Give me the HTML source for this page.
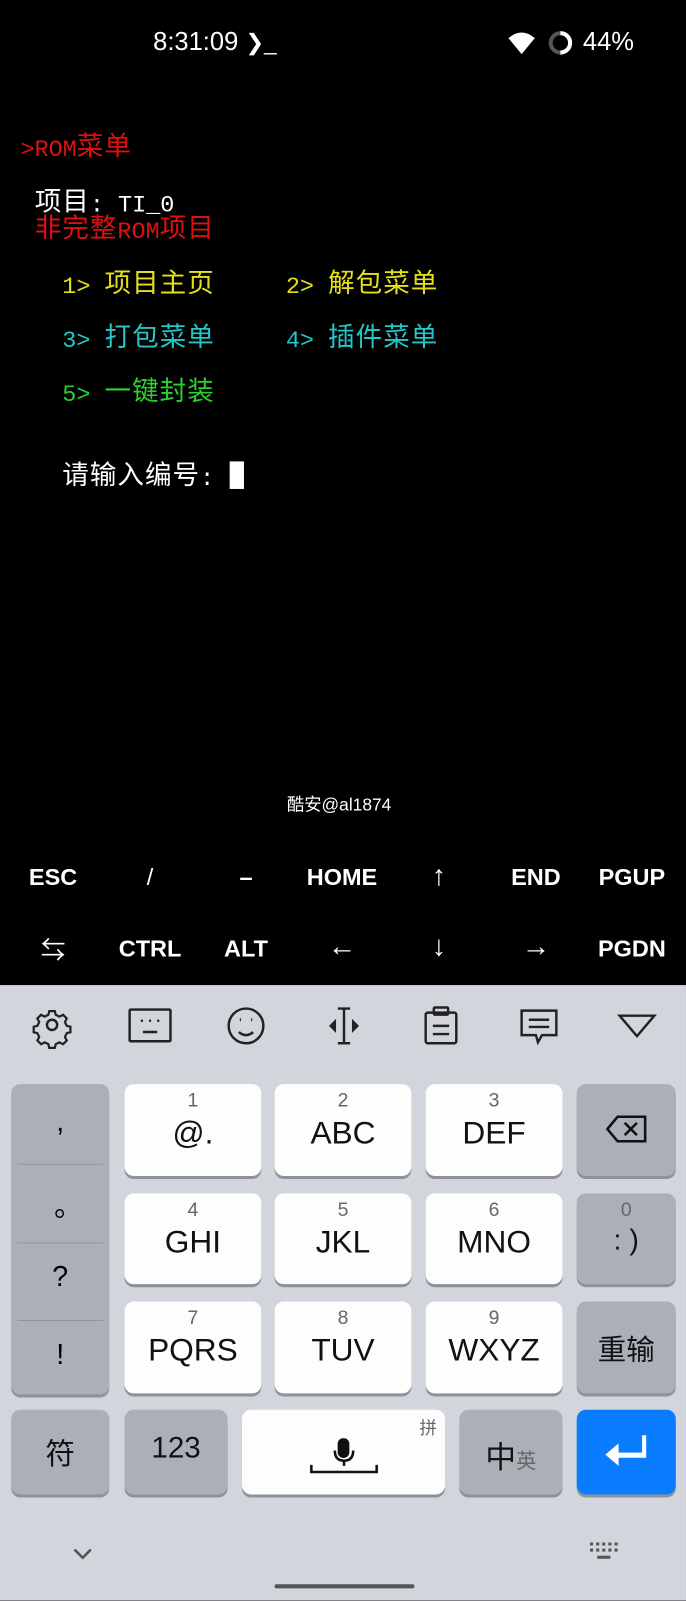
<!DOCTYPE html>
<html><head><meta charset="utf-8"><style>
*{margin:0;padding:0;box-sizing:border-box}
body{width:686px;height:1600px;background:#000;overflow:hidden;font-family:"Liberation Sans","Noto Sans CJK SC",sans-serif}
#w{position:absolute;left:0;top:0;width:672px;height:1568px;transform:scale(1.0208);transform-origin:0 0}
.a{position:absolute;white-space:nowrap}
.t{font-family:"Liberation Mono","Noto Sans CJK SC",monospace;font-size:23px;line-height:28px}
.c{font-family:"Noto Sans CJK SC",sans-serif;font-size:26px;font-weight:normal;letter-spacing:1px;vertical-align:1px}
.ek{position:absolute;color:#fff;font-size:23px;font-weight:bold;text-align:center;width:96px}
.kb{position:absolute;left:0;top:965px;width:672px;height:603px;background:#d2d5db}
.k{position:absolute;border-radius:9px;box-shadow:0 3px 0 #8e9299;text-align:center;color:#111}
.w{background:#fdfdfe}
.g{background:#abb0b8}
.n{position:absolute;left:0;right:0;top:6px;font-size:19px;color:#666}
.l{position:absolute;left:0;right:0;top:30px;font-size:31px}
</style></head><body><div id="w">
<div class="a" style="left:150px;top:27px;color:#fff;font-size:25px">8:31:09 <span style="font-size:22px">❯_</span></div>
<svg class="a" style="left:496px;top:30px" width="30" height="24" viewBox="0 0 30 26"><path d="M1 8 Q15 -4 29 8 L15 25 Z" fill="#fff"/></svg>
<svg class="a" style="left:537px;top:30px" width="24" height="24"><circle cx="12" cy="12" r="9.5" fill="none" stroke="#555" stroke-width="4"/><path d="M12 2.5 A9.5 9.5 0 0 1 12 21.5" fill="none" stroke="#fff" stroke-width="4"/></svg>
<div class="a" style="left:571px;top:27px;color:#fff;font-size:25px">44%</div>

<div class="a t" style="left:20px;top:128px;color:#e01010">&gt;ROM<b class="c">菜单</b></div>
<div class="a t" style="left:34px;top:182px;color:#fff"><b class="c">项目</b>: TI_0</div>
<div class="a t" style="left:34px;top:208px;color:#e01010"><b class="c">非完整</b>ROM<b class="c">项目</b></div>
<div class="a t" style="left:61px;top:262px;color:#e6e01a">1&gt; <b class="c">项目主页</b></div>
<div class="a t" style="left:280px;top:262px;color:#e6e01a">2&gt; <b class="c">解包菜单</b></div>
<div class="a t" style="left:61px;top:315px;color:#22c7c7">3&gt; <b class="c">打包菜单</b></div>
<div class="a t" style="left:280px;top:315px;color:#22c7c7">4&gt; <b class="c">插件菜单</b></div>
<div class="a t" style="left:61px;top:368px;color:#2bd12b">5&gt; <b class="c">一键封装</b></div>
<div class="a t" style="left:61px;top:450px;color:#fff"><b class="c">请输入编号</b>:</div>
<div class="a" style="left:225px;top:452px;width:14px;height:27px;background:#fff"></div>
<div class="a" style="left:281px;top:774px;color:#fff;font-size:17px">酷安@al1874</div>

<div class="ek" style="left:4px;top:846px">ESC</div>
<div class="ek" style="left:99px;top:846px;font-weight:normal">/</div>
<div class="ek" style="left:193px;top:846px">–</div>
<div class="ek" style="left:287px;top:846px">HOME</div>
<div class="ek" style="left:382px;top:842px;font-size:28px;font-weight:normal">↑</div>
<div class="ek" style="left:477px;top:846px">END</div>
<div class="ek" style="left:571px;top:846px">PGUP</div>
<div class="ek" style="left:4px;top:911px;font-size:24px;font-weight:normal">⇆</div>
<div class="ek" style="left:99px;top:916px">CTRL</div>
<div class="ek" style="left:193px;top:916px">ALT</div>
<div class="ek" style="left:287px;top:911px;font-size:28px;font-weight:normal">←</div>
<div class="ek" style="left:382px;top:911px;font-size:28px;font-weight:normal">↓</div>
<div class="ek" style="left:477px;top:911px;font-size:28px;font-weight:normal">→</div>
<div class="ek" style="left:571px;top:916px">PGDN</div>

<div class="kb">
<svg style="position:absolute;left:0;top:0" width="672" height="70" fill="none" stroke="#222" stroke-width="2.4">
<g transform="translate(51,39)"><path d="M-3-15h6l1 4 4 2 4-2 4 4-2 4 2 4 4 1v6l-4 1-2 4 2 4-4 4-4-2-4 2-1 4h-6l-1-4-4-2-4 2-4-4 2-4-2-4-4-1v-6l4-1 2-4-2-4 4-4 4 2 4-2z" transform="scale(.9)"/><circle r="5"/></g>
<rect x="127" y="24" width="40" height="31" rx="1"/><path d="M138 35h2M146 35h2M154 35h2M140 46h14"/>
<circle cx="241" cy="40" r="17"/><path d="M234 46q7 6 14 0"/><path d="M235 34h1M246 34h1" stroke-width="3"/>
<path d="M337 23v34M331 23h12M331 57h12"/><path d="M324 40l4-4v8zM350 40l-4-4v8z" fill="#222"/>
<rect x="417" y="27" width="30" height="30" rx="2"/><rect x="425" y="22" width="14" height="7" rx="1"/><path d="M424 40h16M424 48h16"/>
<path d="M511 25h34v24h-14l-4 7-2-7h-14z"/><path d="M518 34h20M518 41h20"/>
<path d="M607 30h34l-17 20z"/>
</svg>
<div class="k g" style="left:11px;top:97px;width:96px;height:304px"></div>
<div class="a" style="left:17px;top:175px;width:84px;height:1px;background:#8f949c"></div>
<div class="a" style="left:17px;top:252px;width:84px;height:1px;background:#8f949c"></div>
<div class="a" style="left:17px;top:328px;width:84px;height:1px;background:#8f949c"></div>
<div class="a" style="left:11px;top:118px;width:96px;text-align:center;font-size:28px">,</div>
<div class="a" style="left:19px;top:195px;width:96px;text-align:center;font-size:28px">。</div>
<div class="a" style="left:11px;top:270px;width:96px;text-align:center;font-size:28px">?</div>
<div class="a" style="left:11px;top:346px;width:96px;text-align:center;font-size:28px">!</div>

<div class="k w" style="left:122px;top:97px;width:134px;height:90px"><div class="n">1</div><div class="l">@.</div></div>
<div class="k w" style="left:269px;top:97px;width:134px;height:90px"><div class="n">2</div><div class="l">ABC</div></div>
<div class="k w" style="left:417px;top:97px;width:134px;height:90px"><div class="n">3</div><div class="l">DEF</div></div>
<div class="k g" style="left:565px;top:97px;width:97px;height:90px"><svg style="position:absolute;left:28px;top:30px" width="42" height="28" fill="none" stroke="#111" stroke-width="2.5"><path d="M12 2h27v24H12L2 14z"/><path d="M19 8l12 12M31 8L19 20"/></svg></div>

<div class="k w" style="left:122px;top:204px;width:134px;height:89px"><div class="n">4</div><div class="l">GHI</div></div>
<div class="k w" style="left:269px;top:204px;width:134px;height:89px"><div class="n">5</div><div class="l">JKL</div></div>
<div class="k w" style="left:417px;top:204px;width:134px;height:89px"><div class="n">6</div><div class="l">MNO</div></div>
<div class="k g" style="left:565px;top:204px;width:97px;height:89px"><div class="n">0</div><div class="l" style="font-size:28px">: )</div></div>

<div class="k w" style="left:122px;top:310px;width:134px;height:90px"><div class="n">7</div><div class="l">PQRS</div></div>
<div class="k w" style="left:269px;top:310px;width:134px;height:90px"><div class="n">8</div><div class="l">TUV</div></div>
<div class="k w" style="left:417px;top:310px;width:134px;height:90px"><div class="n">9</div><div class="l">WXYZ</div></div>
<div class="k g" style="left:565px;top:310px;width:97px;height:90px"><div class="l" style="top:26px;font-size:28px">重输</div></div>

<div class="k g" style="left:11px;top:416px;width:96px;height:83px"><div class="l" style="top:20px;font-size:29px">符</div></div>
<div class="k g" style="left:122px;top:416px;width:101px;height:83px"><div class="l" style="top:22px;font-size:29px">123</div></div>
<div class="k w" style="left:237px;top:416px;width:199px;height:83px"><div style="position:absolute;right:8px;top:4px;font-size:17px;color:#666">拼</div>
<svg style="position:absolute;left:66px;top:28px" width="68" height="36" fill="none" stroke="#111" stroke-width="2.5"><rect x="29" y="1" width="9" height="17" rx="4.5" fill="#111"/><path d="M25 12q0 10 9 10t9-10M34 22v5"/><path d="M2 26v7h64v-7"/></svg></div>
<div class="k g" style="left:450px;top:416px;width:101px;height:83px"><div class="l" style="top:22px;font-size:30px">中<span style="font-size:20px;color:#666">英</span></div></div>
<div class="k" style="left:565px;top:416px;width:97px;height:83px;background:#0a7cff"><svg style="position:absolute;left:27px;top:23px" width="44" height="36" fill="#fff"><path d="M37 2h4v22H14v8L1 21l13-11v9h23z"/></svg></div>

<svg style="position:absolute;left:70px;top:550px" width="22" height="14" fill="none" stroke="#555" stroke-width="2.5"><path d="M3 3l8 8 8-8"/></svg>
<svg style="position:absolute;left:578px;top:546px" width="30" height="22" fill="#555"><rect x="0" y="0" width="3" height="3"/><rect x="6" y="0" width="3" height="3"/><rect x="12" y="0" width="3" height="3"/><rect x="18" y="0" width="3" height="3"/><rect x="24" y="0" width="3" height="3"/><rect x="0" y="6" width="3" height="3"/><rect x="6" y="6" width="3" height="3"/><rect x="12" y="6" width="3" height="3"/><rect x="18" y="6" width="3" height="3"/><rect x="24" y="6" width="3" height="3"/><rect x="7" y="13" width="13" height="3"/></svg>
<div class="a" style="left:269px;top:587px;width:137px;height:4px;border-radius:2px;background:#555"></div>
</div>
</div></body></html>
